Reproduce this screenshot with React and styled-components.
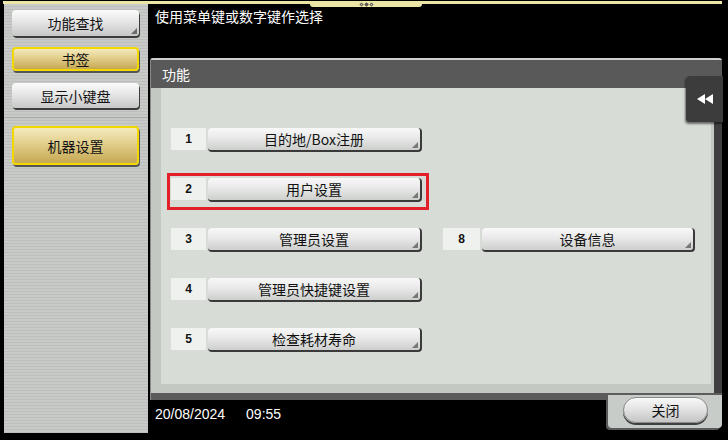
import React from 'react';
import styled, { createGlobalStyle, css } from 'styled-components';

const GlobalStyle = createGlobalStyle`
  body { margin: 0; background: #000; }
  * { box-sizing: border-box; }
`;

const Screen = styled.div`
  width: 728px;
  height: 440px;
  background: #000;
  display: flex;
  flex-direction: column;
  position: relative;
  overflow: hidden;
  font-family: "Noto Sans CJK SC", "Noto Sans", sans-serif;
`;

const TopLine = styled.div`
  height: 3px;
  margin: 1px 6px 0 3px;
  background: #ece6a6;
  position: relative;
`;

const Pager = styled.div`
  position: absolute;
  left: 307px;
  top: 0;
  width: 112px;
  height: 6px;
  background: #ece6a6;
  border-radius: 0 0 3px 3px;
  display: flex;
  justify-content: center;
  align-items: center;
  gap: 2px;
`;

const Dot = styled.span`
  width: 3px;
  height: 3px;
  transform: rotate(45deg);
  border: 1px solid #555;
  background: ${p => (p.$on ? '#555' : 'transparent')};
`;

const Body = styled.div`
  display: flex;
  flex: 1;
  min-height: 0;
`;

const Sidebar = styled.div`
  width: 144px;
  margin: 0 0 7px 4px;
  padding: 6px 9px 0 8px;
  display: flex;
  flex-direction: column;
  background: repeating-linear-gradient(to bottom, #c8cac7 0 2px, #bcbebb 2px 3px);
`;

const buttonGrey = css`
  background: linear-gradient(#fbfbfb, #e6e6e6 45%, #c6c7c6);
  box-shadow: 1px 2px 0 #3c3c3c;
`;

const buttonGold = css`
  background: linear-gradient(#f5eabd, #dfcb86 50%, #c6a852);
  border: 2px solid #f3d800;
  box-shadow: 1px 2px 0 #555;
`;

const SideButton = styled.div`
  height: ${p => p.$h}px;
  margin-top: ${p => p.$mt || 0}px;
  border-radius: 4px;
  display: flex;
  align-items: center;
  justify-content: center;
  font-size: 14px;
  color: #111;
  position: relative;
  ${p => (p.$gold ? buttonGold : buttonGrey)}
  ${p => p.$corner && css`
    &::after {
      content: '';
      position: absolute;
      right: 2px;
      bottom: 2px;
      border-style: solid;
      border-width: 0 0 6px 6px;
      border-color: transparent transparent #6a6a6a transparent;
    }
  `}
`;

const Divider = styled.div`
  height: 1px;
  margin: 9px -9px 0 -8px;
  background: #a7a9a6;
`;

const Main = styled.div`
  flex: 1;
  display: flex;
  flex-direction: column;
  padding: 0 6px 0 2px;
`;

const Message = styled.div`
  height: 54px;
  padding: 4px 0 0 5px;
  color: #fff;
  font-size: 14px;
  line-height: 16px;
`;

const Panel = styled.div`
  height: 342px;
  display: flex;
  flex-direction: column;
  position: relative;
  background: #5c5c5c;
  border-top: 2px solid #cfd0cf;
  border-left: 1px solid #8a8a8a;
  border-radius: 3px 3px 0 0;
  padding-bottom: 7px;
`;

const PanelHeader = styled.div`
  height: 28px;
  flex: none;
  background: #595959;
  color: #fff;
  font-size: 14px;
  display: flex;
  align-items: center;
  padding-left: 11px;
`;

const PanelBody = styled.div`
  flex: 1;
  display: flex;
  background: #c3c8c3;
  padding: 0 3px 9px 10px;
  border-right: 8px solid #3f3f3f;
`;

const Content = styled.div`
  flex: 1;
  background: #d7dcd7;
  padding: 40px 0 0 10px;
  display: grid;
  grid-template-columns: 251px 252px;
  grid-auto-rows: 24px;
  column-gap: 21px;
  row-gap: 26px;
  align-content: start;
`;

const Item = styled.div`
  grid-column: ${p => p.$col};
  grid-row: ${p => p.$row};
  display: flex;
  gap: 2px;
  position: relative;
  ${p => p.$selected && css`
    &::after {
      content: '';
      position: absolute;
      left: -4px;
      right: -7px;
      top: -5px;
      bottom: -8px;
      border: 3px solid #e3202a;
    }
  `}
`;

const NumBox = styled.div`
  width: ${p => p.$w || 35}px;
  height: 22px;
  background: #eff1ef;
  display: flex;
  align-items: center;
  justify-content: center;
  font-family: "Liberation Sans", Arial, sans-serif;
  font-weight: bold;
  font-size: 12px;
  color: #111;
`;

const MenuButton = styled.div`
  flex: 1;
  height: 24px;
  border-radius: 4px;
  background: linear-gradient(#f7f8f7, #e8e9e8 45%, #cdcfcd);
  border-right: 2px solid #3a3a3a;
  border-bottom: 2px solid #3a3a3a;
  display: flex;
  align-items: center;
  justify-content: center;
  font-size: 14px;
  color: #111;
  position: relative;
  &::after {
    content: '';
    position: absolute;
    right: 2px;
    bottom: 2px;
    border-style: solid;
    border-width: 0 0 6px 6px;
    border-color: transparent transparent #777 transparent;
  }
`;

const BackTab = styled.div`
  position: absolute;
  right: -1px;
  top: 16px;
  width: 37px;
  height: 46px;
  background: #3c3c3c;
  border-radius: 4px 0 0 4px;
  box-shadow: -1px 2px 2px rgba(0, 0, 0, 0.5);
  display: flex;
  align-items: center;
  justify-content: center;
`;

const Footer = styled.div`
  flex: 1;
  display: flex;
  align-items: flex-start;
`;

const Stamp = styled.span`
  color: #fff;
  font-family: "Liberation Sans", Arial, sans-serif;
  font-size: 14px;
  line-height: 16px;
  padding-top: 6px;
  margin-left: ${p => p.$ml}px;
`;

const CloseTab = styled.div`
  position: relative;
  margin: -5px 0 0 auto;
  width: 114px;
  height: 33px;
  background: #c8ccc8;
  border-radius: 0 0 4px 4px;
  box-shadow: -2px 2px 0 #5a5a5a;
  padding: 2px 0 0 15px;
`;

const CloseButton = styled.div`
  width: 85px;
  height: 26px;
  border-radius: 13px;
  background: linear-gradient(#f8f8f8, #e4e4e4 45%, #c4c5c4);
  border: 1px solid #8a8a8a;
  box-shadow: 0 2px 0 #404040;
  display: flex;
  align-items: center;
  justify-content: center;
  font-size: 14px;
  color: #111;
`;

const RewindIcon = () => (
  <svg width="16" height="10" viewBox="0 0 16 10">
    <path d="M8 0 L0 5 L8 10 Z M16 0 L8 5 L16 10 Z" fill="#fff" />
  </svg>
);

const items = [
  { n: '1', label: '目的地/Box注册', col: 1, row: 1 },
  { n: '2', label: '用户设置', col: 1, row: 2, selected: true },
  { n: '3', label: '管理员设置', col: 1, row: 3 },
  { n: '4', label: '管理员快捷键设置', col: 1, row: 4 },
  { n: '5', label: '检查耗材寿命', col: 1, row: 5 },
  { n: '8', label: '设备信息', col: 2, row: 3, w: 37 },
];

export default function App() {
  return (
    <>
      <GlobalStyle />
      <Screen>
        <TopLine>
          <Pager>
            <Dot />
            <Dot $on />
            <Dot />
          </Pager>
        </TopLine>
        <Body>
          <Sidebar>
            <SideButton $h={26} $corner>功能查找</SideButton>
            <SideButton $h={24} $mt={11} $gold>书签</SideButton>
            <SideButton $h={25} $mt={12}>显示小键盘</SideButton>
            <Divider />
            <SideButton $h={39} $mt={8} $gold>机器设置</SideButton>
          </Sidebar>
          <Main>
            <Message>使用菜单键或数字键作选择</Message>
            <Panel>
              <PanelHeader>功能</PanelHeader>
              <PanelBody>
                <Content>
                  {items.map(it => (
                    <Item key={it.n} $col={it.col} $row={it.row} $selected={it.selected}>
                      <NumBox $w={it.w}>{it.n}</NumBox>
                      <MenuButton>{it.label}</MenuButton>
                    </Item>
                  ))}
                </Content>
              </PanelBody>
              <BackTab>
                <RewindIcon />
              </BackTab>
            </Panel>
            <Footer>
              <Stamp $ml={5}>20/08/2024</Stamp>
              <Stamp $ml={21}>09:55</Stamp>
              <CloseTab>
                <CloseButton>关闭</CloseButton>
              </CloseTab>
            </Footer>
          </Main>
        </Body>
      </Screen>
    </>
  );
}
